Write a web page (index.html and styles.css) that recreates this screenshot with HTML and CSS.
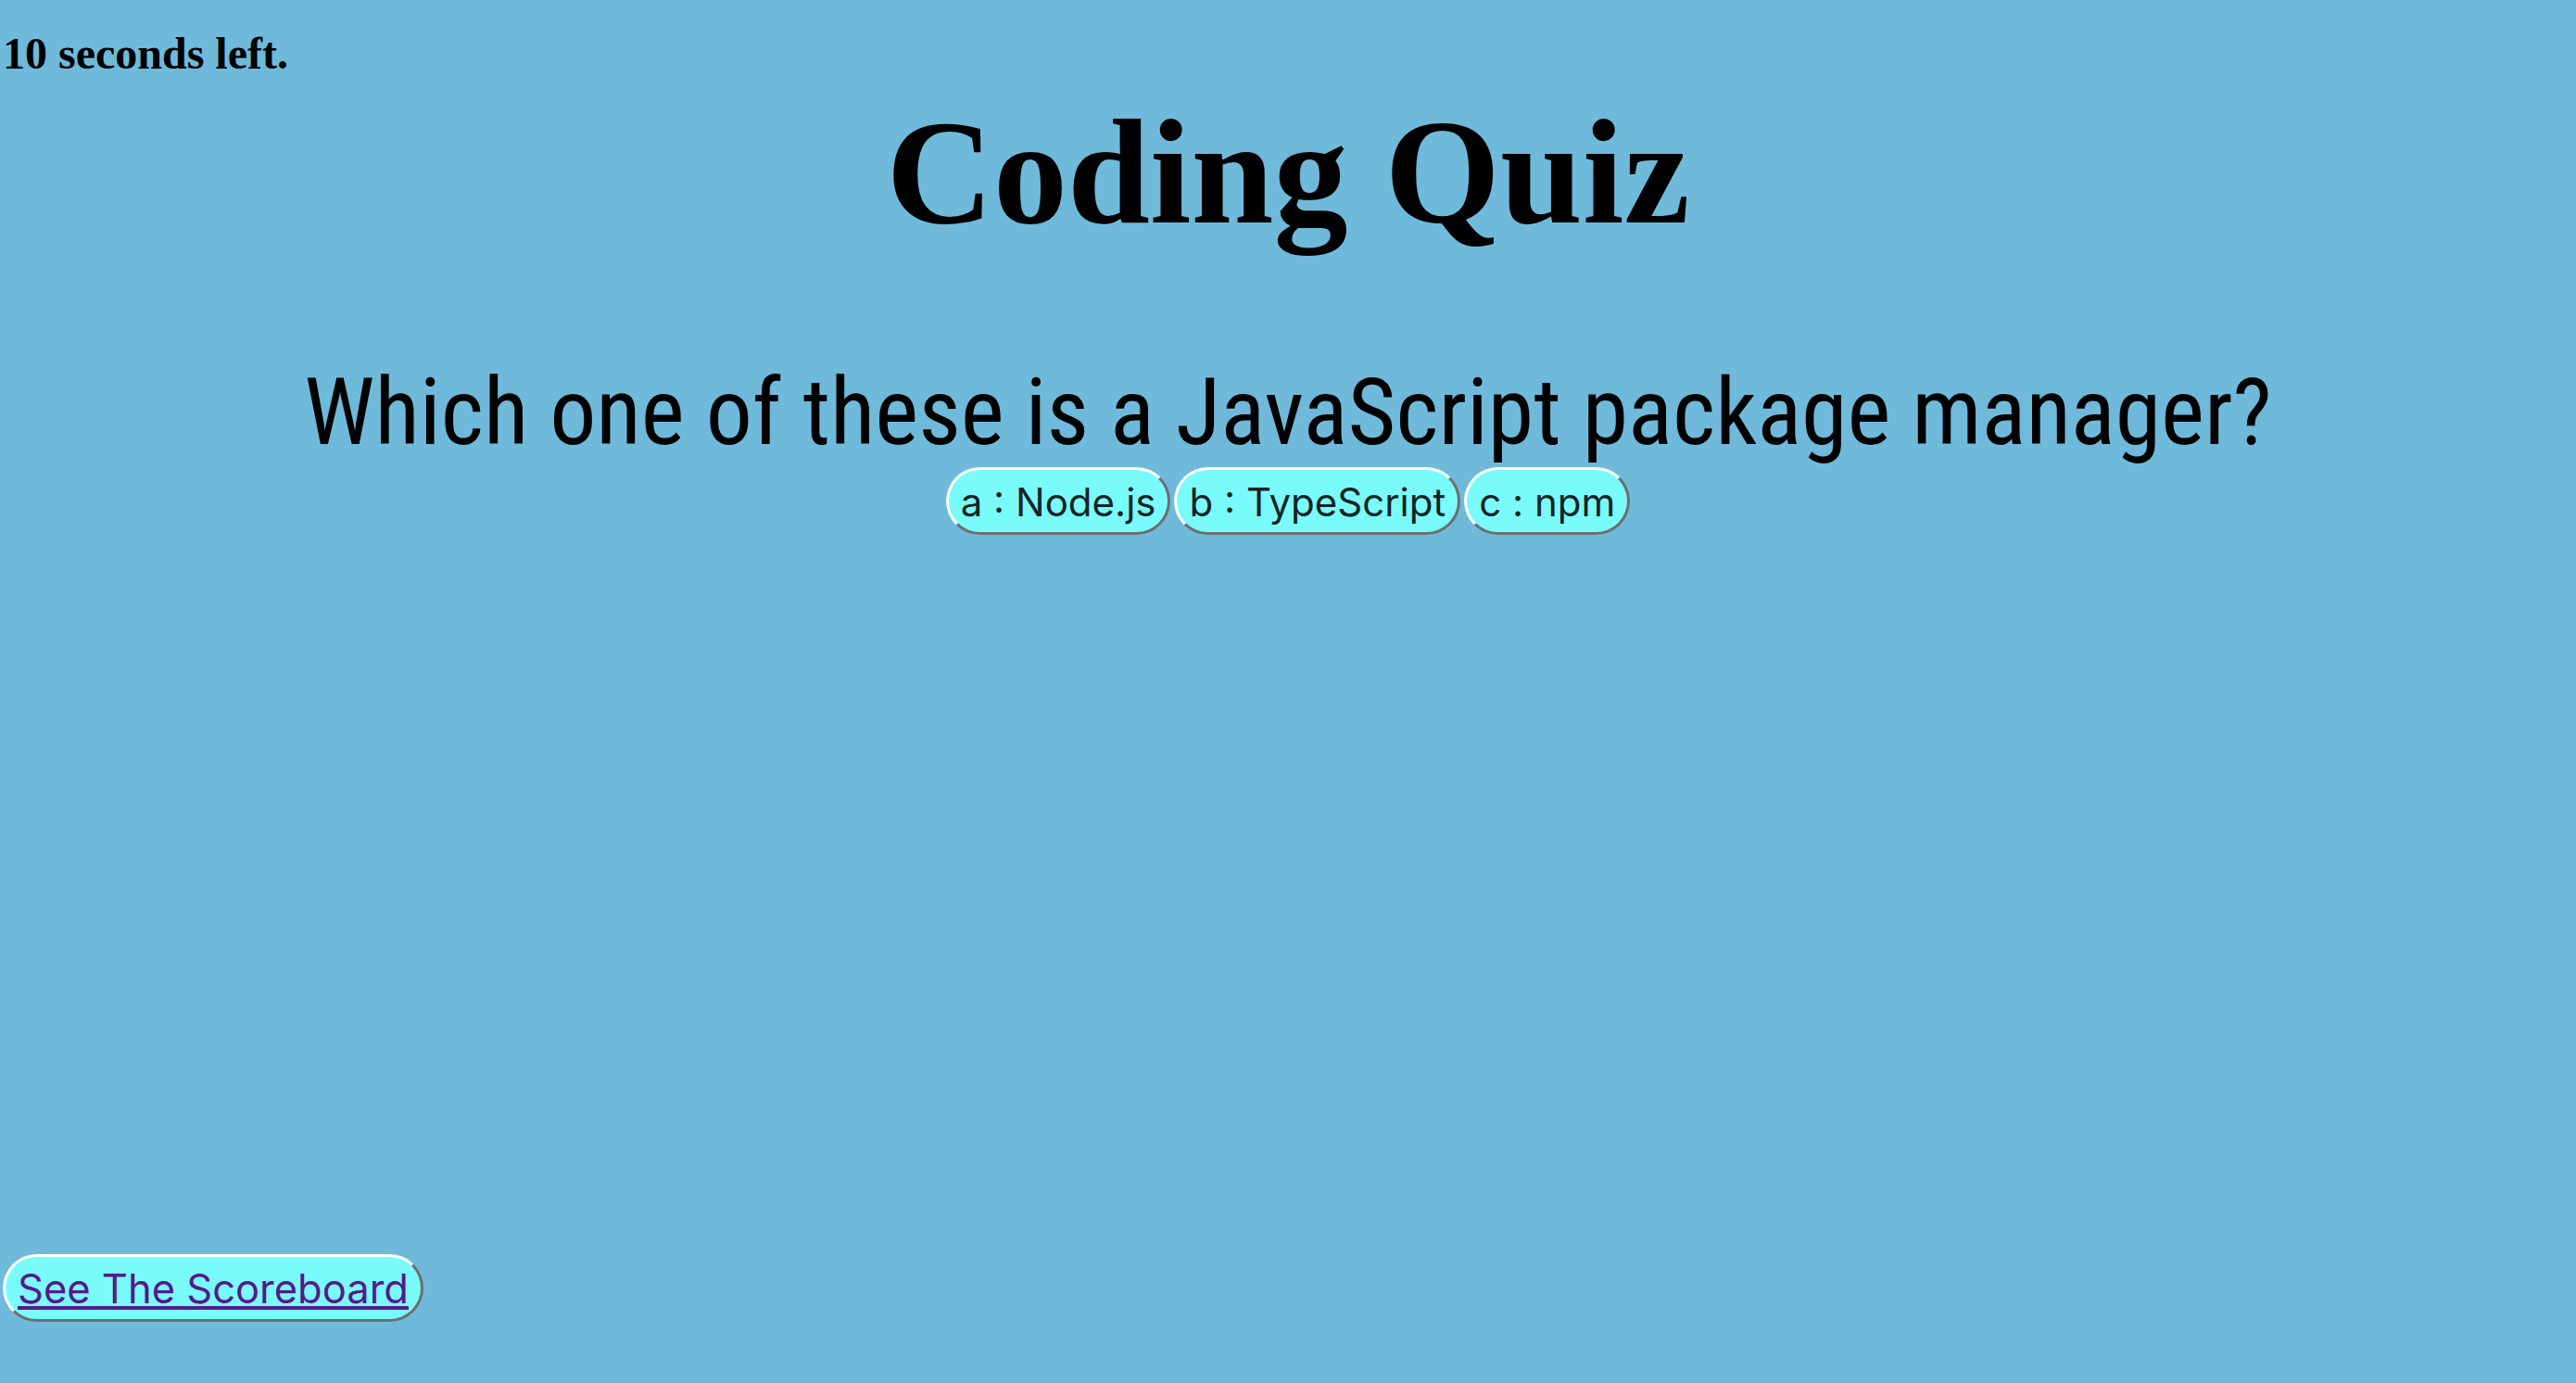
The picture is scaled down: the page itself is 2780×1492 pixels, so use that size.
FILE: index.html
```html
<!DOCTYPE html>
<html lang="en">
<head>
<meta charset="utf-8">
<title>Coding Quiz</title>
<link rel="stylesheet" href="styles.css">
</head>
<body>
<div class="page">
  <h2 class="timer">10 seconds left.</h2>
  <h1 class="title">Coding Quiz</h1>
  <main class="quiz">
    <h3 class="question"><span class="question-text">Which one of these is a JavaScript package manager?</span></h3>
    <div class="choices">
      <button class="choice" type="button">a : Node.js</button>
      <button class="choice" type="button">b : TypeScript</button>
      <button class="choice" type="button">c : npm</button>
    </div>
  </main>
  <footer class="footer">
    <button class="choice score-btn" type="button"><a class="score-link" href="#scores">See The Scoreboard</a></button>
  </footer>
</div>
</body>
</html>
```
FILE: styles.css
```css
html, body {
  margin: 0;
  padding: 0;
}
body {
  background: #6fbadb;
  color: #000;
}
.page {
  min-height: 1492px;
  display: flex;
  flex-direction: column;
  box-sizing: border-box;
}
.timer {
  margin: 30px 0 0 3px;
  font-family: "Liberation Serif", "Times New Roman", serif;
  font-weight: 700;
  font-size: 48px;
  line-height: 56px;
}
.title {
  margin: 10px 0 0 0;
  text-align: center;
  font-family: "Liberation Serif", "Times New Roman", serif;
  font-weight: 700;
  font-size: 160px;
  line-height: 180px;
}
.quiz {
  margin-top: 110px;
  display: flex;
  flex-direction: column;
  align-items: center;
}
.question {
  margin: 0;
  font-family: Roboto, "Noto Sans", sans-serif;
  font-weight: 400;
  font-size: 100px;
  line-height: 118px;
  font-stretch: 75%;
  text-align: center;
}
.question-text {
  display: inline-block;
}
.choices {
  display: flex;
  gap: 4px;
  justify-content: center;
}
.choice {
  font-family: Inter, Roboto, sans-serif;
  font-size: 42px;
  line-height: 51px;
  color: #122424;
  background: #7afbfb;
  border-width: 3px;
  border-style: solid;
  border-color: #ffffff #6e6e6e #6e6e6e #ffffff;
  border-radius: 40px;
  padding: 9px 13px 7px 13px;
  margin: 0;
  cursor: pointer;
}
.footer {
  margin-top: auto;
  padding: 0 0 66px 3px;
}
.score-btn {
  font-size: 43.5px;
  line-height: 57px;
  padding: 6px 13px 4px 13px;
}
.score-link {
  color: #551a8b;
  text-decoration: underline;
}
```
